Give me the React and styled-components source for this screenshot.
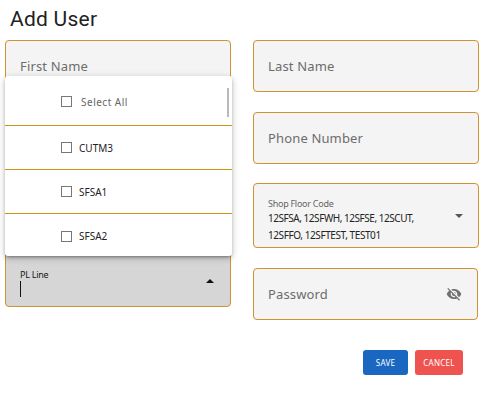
import React from "react";
import styled, { createGlobalStyle } from "styled-components";
import { MdVisibilityOff } from "react-icons/md";

const GlobalStyle = createGlobalStyle`
  *, *::before, *::after { box-sizing: border-box; }
  body {
    margin: 0;
    background: #fff;
    font-family: "Noto Sans", "Open Sans", sans-serif;
  }
`;

const Page = styled.main`
  width: 485px;
  height: 414px;
  padding: 6px 0 0 5px;
  overflow: hidden;
`;

const Title = styled.h1`
  margin: 0 0 8px 5px;
  font: 400 21px/26px Roboto, sans-serif;
  letter-spacing: 0.25px;
  color: #212121;
`;

const Columns = styled.div`
  display: grid;
  grid-template-columns: 226px 226px;
  column-gap: 22px;
`;

const Column = styled.div`
  position: relative;
  display: flex;
  flex-direction: column;
  justify-content: ${(p) => (p.$spread ? "space-between" : "flex-start")};
  height: ${(p) => (p.$spread ? "267px" : "auto")};
`;

const Field = styled.div`
  display: flex;
  align-items: center;
  justify-content: space-between;
  width: ${(p) => p.$width || "226px"};
  height: ${(p) => p.$height || "52px"};
  margin-bottom: ${(p) => p.$gap || "0"};
  padding: 0 14px;
  border: 1px solid #cf9230;
  border-radius: 4px;
  background: ${(p) => (p.$open ? "#d6d6d6" : "#f4f4f4")};
`;

const Placeholder = styled.span`
  font-size: 13px;
  line-height: 18px;
  letter-spacing: 0.15px;
  color: #6c6c6c;
`;

const SelectContent = styled.div`
  display: flex;
  flex-direction: column;
  align-self: flex-start;
  padding-top: ${(p) => p.$top};
`;

const FloatingLabel = styled.span`
  font-size: 9px;
  line-height: 13px;
  letter-spacing: ${(p) => (p.$active ? "-0.25px" : "-0.27px")};
  color: ${(p) => (p.$active ? "#161616" : "#666")};
`;

const Value = styled.span`
  font-size: 10px;
  line-height: 17px;
  letter-spacing: ${(p) => p.$tracking};
  color: #222;
  white-space: nowrap;
`;

const Caret = styled.span`
  width: 1px;
  height: 16px;
  background: #111;
`;

const Arrow = styled.svg`
  display: block;
  width: 8px;
  height: 4px;
  margin-right: ${(p) => p.$right};
  margin-top: ${(p) => p.$top || "0"};
  fill: ${(p) => p.$color};
`;

const HiddenIcon = styled(MdVisibilityOff)`
  width: 16px;
  height: 16px;
  margin-right: 1px;
  color: #707070;
`;

const Menu = styled.div`
  position: absolute;
  top: 36px;
  left: 0;
  width: 227px;
  height: 180px;
  border-radius: 3px;
  background: #fff;
  box-shadow: 0 2px 3px -1px rgba(0, 0, 0, 0.35), 0 2px 7px rgba(0, 0, 0, 0.25);
`;

const Option = styled.div`
  display: flex;
  align-items: center;
  gap: ${(p) => (p.$all ? "9px" : "7px")};
  height: ${(p) => (p.$all ? "50px" : "44px")};
  padding: ${(p) => (p.$all ? "2px" : "0")} 0 0 56px;
  border-bottom: ${(p) => (p.$last ? "0" : "1px")} solid #d09410;
`;

const Checkbox = styled.span`
  width: 11px;
  height: 11px;
  border: 1px solid #777;
`;

const OptionText = styled.span`
  font-size: 10px;
  line-height: 14px;
  letter-spacing: ${(p) => (p.$all ? "0.5px" : "0")};
  color: ${(p) => (p.$all ? "#666" : "#222")};
`;

const ScrollThumb = styled.span`
  position: absolute;
  top: 12px;
  right: 3px;
  width: 2px;
  height: 29px;
  background: #b8b8b8;
`;

const Actions = styled.div`
  display: flex;
  justify-content: flex-end;
  gap: 7px;
  margin: 30px 16px 0 0;
`;

const Button = styled.button`
  width: ${(p) => p.$width};
  height: 25px;
  padding: 1px 0 0;
  border: 0;
  border-radius: 3px;
  background: ${(p) => p.$color};
  color: #fff;
  font: 400 8px/12px "Noto Sans", sans-serif;
  letter-spacing: 0.25px;
`;

export default function App() {
  return (
    <>
      <GlobalStyle />
      <Page>
        <Title>Add User</Title>
        <Columns>
          <Column $spread>
            <Field>
              <Placeholder>First Name</Placeholder>
            </Field>
            <Field $open $height="56px">
              <SelectContent $top="16px">
                <FloatingLabel $active>PL Line</FloatingLabel>
                <Caret />
              </SelectContent>
              <Arrow viewBox="0 0 8 4" $right="2px" $top="4px" $color="#111">
                <path d="M0 4 4 0l4 4z" />
              </Arrow>
            </Field>
            <Menu>
              <Option $all>
                <Checkbox />
                <OptionText $all>Select All</OptionText>
              </Option>
              {["CUTM3", "SFSA1", "SFSA2"].map((line, i) => (
                <Option key={line} $last={i === 2}>
                  <Checkbox />
                  <OptionText>{line}</OptionText>
                </Option>
              ))}
              <ScrollThumb />
            </Menu>
          </Column>
          <Column>
            <Field $gap="20px">
              <Placeholder>Last Name</Placeholder>
            </Field>
            <Field $gap="19px">
              <Placeholder>Phone Number</Placeholder>
            </Field>
            <Field $height="65px" $gap="20px">
              <SelectContent $top="13px">
                <FloatingLabel>Shop Floor Code</FloatingLabel>
                <Value $tracking="-0.46px">12SFSA, 12SFWH, 12SFSE, 12SCUT,</Value>
                <Value $tracking="-0.41px">12SFFO, 12SFTEST, TEST01</Value>
              </SelectContent>
              <Arrow viewBox="0 0 8 4" $right="1px" $color="#555">
                <path d="M0 0h8L4 4z" />
              </Arrow>
            </Field>
            <Field $width="225px">
              <Placeholder>Password</Placeholder>
              <HiddenIcon />
            </Field>
            <Actions>
              <Button $width="45px" $color="#1967c0">SAVE</Button>
              <Button $width="48px" $color="#ef5350">CANCEL</Button>
            </Actions>
          </Column>
        </Columns>
      </Page>
    </>
  );
}
